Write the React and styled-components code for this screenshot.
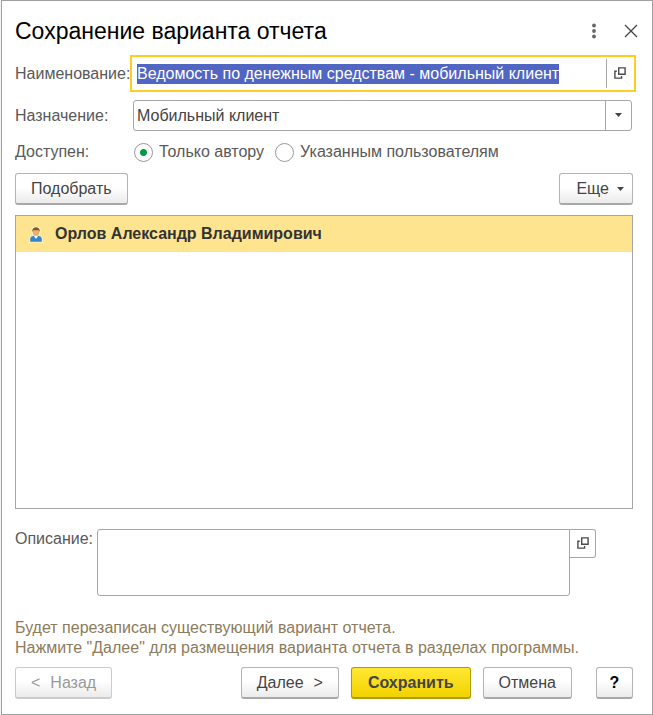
import React from 'react';
import styled, { createGlobalStyle } from 'styled-components';

function ExpandIcon() {
  return (
    <svg width="12" height="12" viewBox="0 0 12 12" fill="none" stroke="#4a4a4a" strokeWidth="1.4">
      <path d="M4.700 .9h6.400v6.400H4.700z" />
      <path d="M2.800 4.200H.9v6.900h6.700V9.100" />
    </svg>
  );
}

function ArrowIcon() {
  return (
    <svg width="7" height="4" viewBox="0 0 7 4" fill="#444">
      <path d="M0 0h7L3.500 4z" />
    </svg>
  );
}

function UserIcon() {
  return (
    <svg width="14" height="17" viewBox="0 0 14 17">
      <path d="M.5 16.500V13C.5 10.500 2 10 3.500 9.500L2.500 7V4C2.500-.8 11.500-.8 11.500 4v3l-1 2.500c1.500.5 3 1 3 3.500v3.500z" fill="#fff3d0" />
      <path d="M1.200 15.800V13c0-2 1.500-2.700 3.600-3.200h4.400c2.100.5 3.600 1.200 3.600 3.200v2.800z" fill="#2f86c9" />
      <path d="M4.800 9.800h4.400L7 13z" fill="#fff" />
      <ellipse cx="7" cy="6" rx="3.300" ry="4" fill="#edb066" />
      <path d="M3.200 6C2.500-.3 11.500-.3 10.800 6L9.800 4.200H4.200z" fill="#7c5a36" />
    </svg>
  );
}

function App() {
  const [name, setName] = React.useState('Ведомость по денежным средствам - мобильный клиент');
  const [target, setTarget] = React.useState('mobile');
  const [access, setAccess] = React.useState('author');
  const [description, setDescription] = React.useState('');
  const nameRef = React.useRef(null);

  React.useEffect(() => {
    nameRef.current.focus();
    nameRef.current.select();
  }, []);

  return (
    <>
      <GlobalStyle />
      <Dialog>
        <Header>
          <Title>Сохранение варианта отчета</Title>
          <HeaderButton aria-label="Меню">
            <svg width="6" height="16" viewBox="0 0 6 16" fill="#666">
              <circle cx="3" cy="2.500" r="1.900" />
              <circle cx="3" cy="8" r="1.900" />
              <circle cx="3" cy="13.500" r="1.900" />
            </svg>
          </HeaderButton>
          <HeaderButton aria-label="Закрыть">
            <svg width="14" height="14" viewBox="0 0 14 14" stroke="#444" strokeWidth="1.300">
              <path d="M1 1l12 12M13 1L1 13" />
            </svg>
          </HeaderButton>
        </Header>

        <Form>
          <Label htmlFor="name">Наименование:</Label>
          <ActiveField>
            <Input id="name" ref={nameRef} value={name} onChange={(e) => setName(e.target.value)} />
            <FieldButton aria-label="Открыть"><ExpandIcon /></FieldButton>
          </ActiveField>

          <Label htmlFor="target">Назначение:</Label>
          <Field>
            <Select id="target" value={target} onChange={(e) => setTarget(e.target.value)}>
              <option value="mobile">Мобильный клиент</option>
            </Select>
            <SelectArrow><ArrowIcon /></SelectArrow>
          </Field>

          <Label as="span" id="access">Доступен:</Label>
          <RadioGroup role="radiogroup" aria-labelledby="access">
            <RadioLabel>
              <Radio name="access" checked={access === 'author'} onChange={() => setAccess('author')} />
              Только автору
            </RadioLabel>
            <RadioLabel>
              <Radio name="access" checked={access === 'users'} onChange={() => setAccess('users')} />
              Указанным пользователям
            </RadioLabel>
          </RadioGroup>
        </Form>

        <Toolbar>
          <Button>Подобрать</Button>
          <MoreButton>Еще <ArrowIcon /></MoreButton>
        </Toolbar>

        <UserList>
          <UserRow>
            <UserIcon />
            Орлов Александр Владимирович
          </UserRow>
        </UserList>

        <DescriptionRow>
          <Label htmlFor="description">Описание:</Label>
          <Description
            id="description"
            value={description}
            onChange={(e) => setDescription(e.target.value)}
          />
          <SideButton aria-label="Открыть описание"><ExpandIcon /></SideButton>
        </DescriptionRow>

        <Note>
          Будет перезаписан существующий вариант отчета.
          <br />
          Нажмите "Далее" для размещения варианта отчета в разделах программы.
        </Note>

        <Footer>
          <Button disabled><span>&lt;</span>Назад</Button>
          <Actions>
            <Button>Далее<span>&gt;</span></Button>
            <PrimaryButton>Сохранить</PrimaryButton>
            <Button>Отмена</Button>
          </Actions>
          <HelpButton>?</HelpButton>
        </Footer>
      </Dialog>
    </>
  );
}

const GlobalStyle = createGlobalStyle`
  * {
    box-sizing: border-box;
  }
  body {
    margin: 0;
    padding-left: 1px;
    background: #f4f4f4;
  }
  body, button, input, select, textarea {
    font-family: "Liberation Sans", Arial, sans-serif;
    font-size: 16px;
    line-height: 20px;
    color: #444;
  }
  svg {
    display: block;
    flex: none;
  }
`;

const Dialog = styled.main`
  background: #fff;
  border: 1px solid #a0a0a0;
  padding: 0 19px 15px 13px;
`;

const Header = styled.header`
  display: flex;
  align-items: center;
  gap: 13px;
  height: 57px;
  padding-top: 2px;
  margin-right: -10px;
`;

const Title = styled.h1`
  flex: 1;
  margin: 0;
  font-size: 23px;
  font-weight: normal;
  line-height: 28px;
  color: #000;
`;

const HeaderButton = styled.button`
  display: flex;
  align-items: center;
  justify-content: center;
  width: 24px;
  height: 24px;
  padding: 0;
  border: 0;
  background: none;
`;

const Form = styled.div`
  display: grid;
  grid-template-columns: 118px 1fr;
  row-gap: 11px;
  align-items: center;
`;

const Label = styled.label`
  color: #595959;
  white-space: nowrap;
`;

const Field = styled.div`
  display: flex;
  position: relative;
  height: 31px;
  margin-right: 1px;
  border: 1px solid #a6a6a6;
  border-radius: 3px;
  background: #fff;
`;

const ActiveField = styled(Field)`
  margin-right: 0;
  border-color: #fff;
  border-radius: 0;
  box-shadow: 0 0 0 1px #fff, 0 0 0 3px #fc2;
`;

const Input = styled.input`
  flex: 1;
  min-width: 0;
  padding: 0 3px;
  border: 0;
  outline: 0;
  background: none;
  &::selection {
    background: rgba(79, 99, 193, 0.99);
    color: #fff;
  }
`;

const FieldButton = styled.button`
  display: flex;
  align-items: center;
  justify-content: center;
  width: 26px;
  padding: 0 0 2px;
  border: 0;
  border-left: 1px solid #a6a6a6;
  background: none;
`;

const Select = styled.select`
  flex: 1;
  appearance: none;
  padding: 0 30px 0 3px;
  border: 0;
  outline: 0;
  background: none;
`;

const SelectArrow = styled.span`
  display: flex;
  position: absolute;
  top: 0;
  right: 0;
  bottom: 0;
  align-items: center;
  justify-content: center;
  width: 26px;
  padding-bottom: 2px;
  border-left: 1px solid #a6a6a6;
  pointer-events: none;
`;

const RadioGroup = styled.div`
  display: flex;
  gap: 10px;
`;

const RadioLabel = styled.label`
  display: flex;
  align-items: center;
  gap: 6px;
  color: #595959;
`;

const Radio = styled.input.attrs({ type: 'radio' })`
  appearance: none;
  width: 19px;
  height: 19px;
  margin: 0 0 0 1px;
  border: 1px solid #999;
  border-radius: 50%;
  background: #fff;
  &:checked {
    background: radial-gradient(circle, #009a46 3px, #fff 4px);
  }
`;

const Button = styled.button`
  display: flex;
  align-items: center;
  justify-content: center;
  gap: 10px;
  height: 32px;
  padding: 0 15px;
  border: 1px solid #b3b3b3;
  border-bottom: 2px solid #a8a8a8;
  border-radius: 3px;
  background: linear-gradient(#fff 45%, #ebebeb);
  &:disabled {
    border-color: #ccc;
    color: #999;
  }
`;

const MoreButton = styled(Button)`
  gap: 8px;
  padding: 0 8px 0 16px;
`;

const PrimaryButton = styled(Button)`
  padding: 0 16px;
  border-color: #b09c00;
  background: linear-gradient(#ffe833, #f2d300);
  font-weight: bold;
`;

const HelpButton = styled(Button)`
  width: 37px;
  padding: 0;
  color: #000;
  font-weight: bold;
`;

const Toolbar = styled.div`
  display: flex;
  justify-content: space-between;
  margin: 11px 0 10px;
`;

const UserList = styled.ul`
  height: 294px;
  margin: 0;
  padding: 0;
  border: 1px solid #a6a6a6;
  list-style: none;
`;

const UserRow = styled.li`
  display: flex;
  align-items: center;
  gap: 12px;
  height: 36px;
  padding-left: 13px;
  background: #ffe48f;
  color: #333;
  font-weight: bold;
`;

const DescriptionRow = styled.div`
  display: flex;
  align-items: flex-start;
  margin: 20px 37px 0 0;
`;

const Description = styled.textarea`
  flex: 1;
  height: 67px;
  margin-left: 4px;
  padding: 4px;
  border: 1px solid #a6a6a6;
  border-radius: 3px 0 3px 3px;
  outline: 0;
  resize: none;
`;

const SideButton = styled(FieldButton)`
  height: 29px;
  border: 1px solid #a6a6a6;
  border-left: 0;
  border-radius: 0 3px 3px 0;
`;

const Note = styled.p`
  margin: 22px 0 9px;
  color: #8c7b5c;
`;

const Footer = styled.footer`
  display: flex;
  gap: 24px;
`;

const Actions = styled.div`
  display: flex;
  flex: 1;
  justify-content: flex-end;
  gap: 12px;
`;

export default App;
